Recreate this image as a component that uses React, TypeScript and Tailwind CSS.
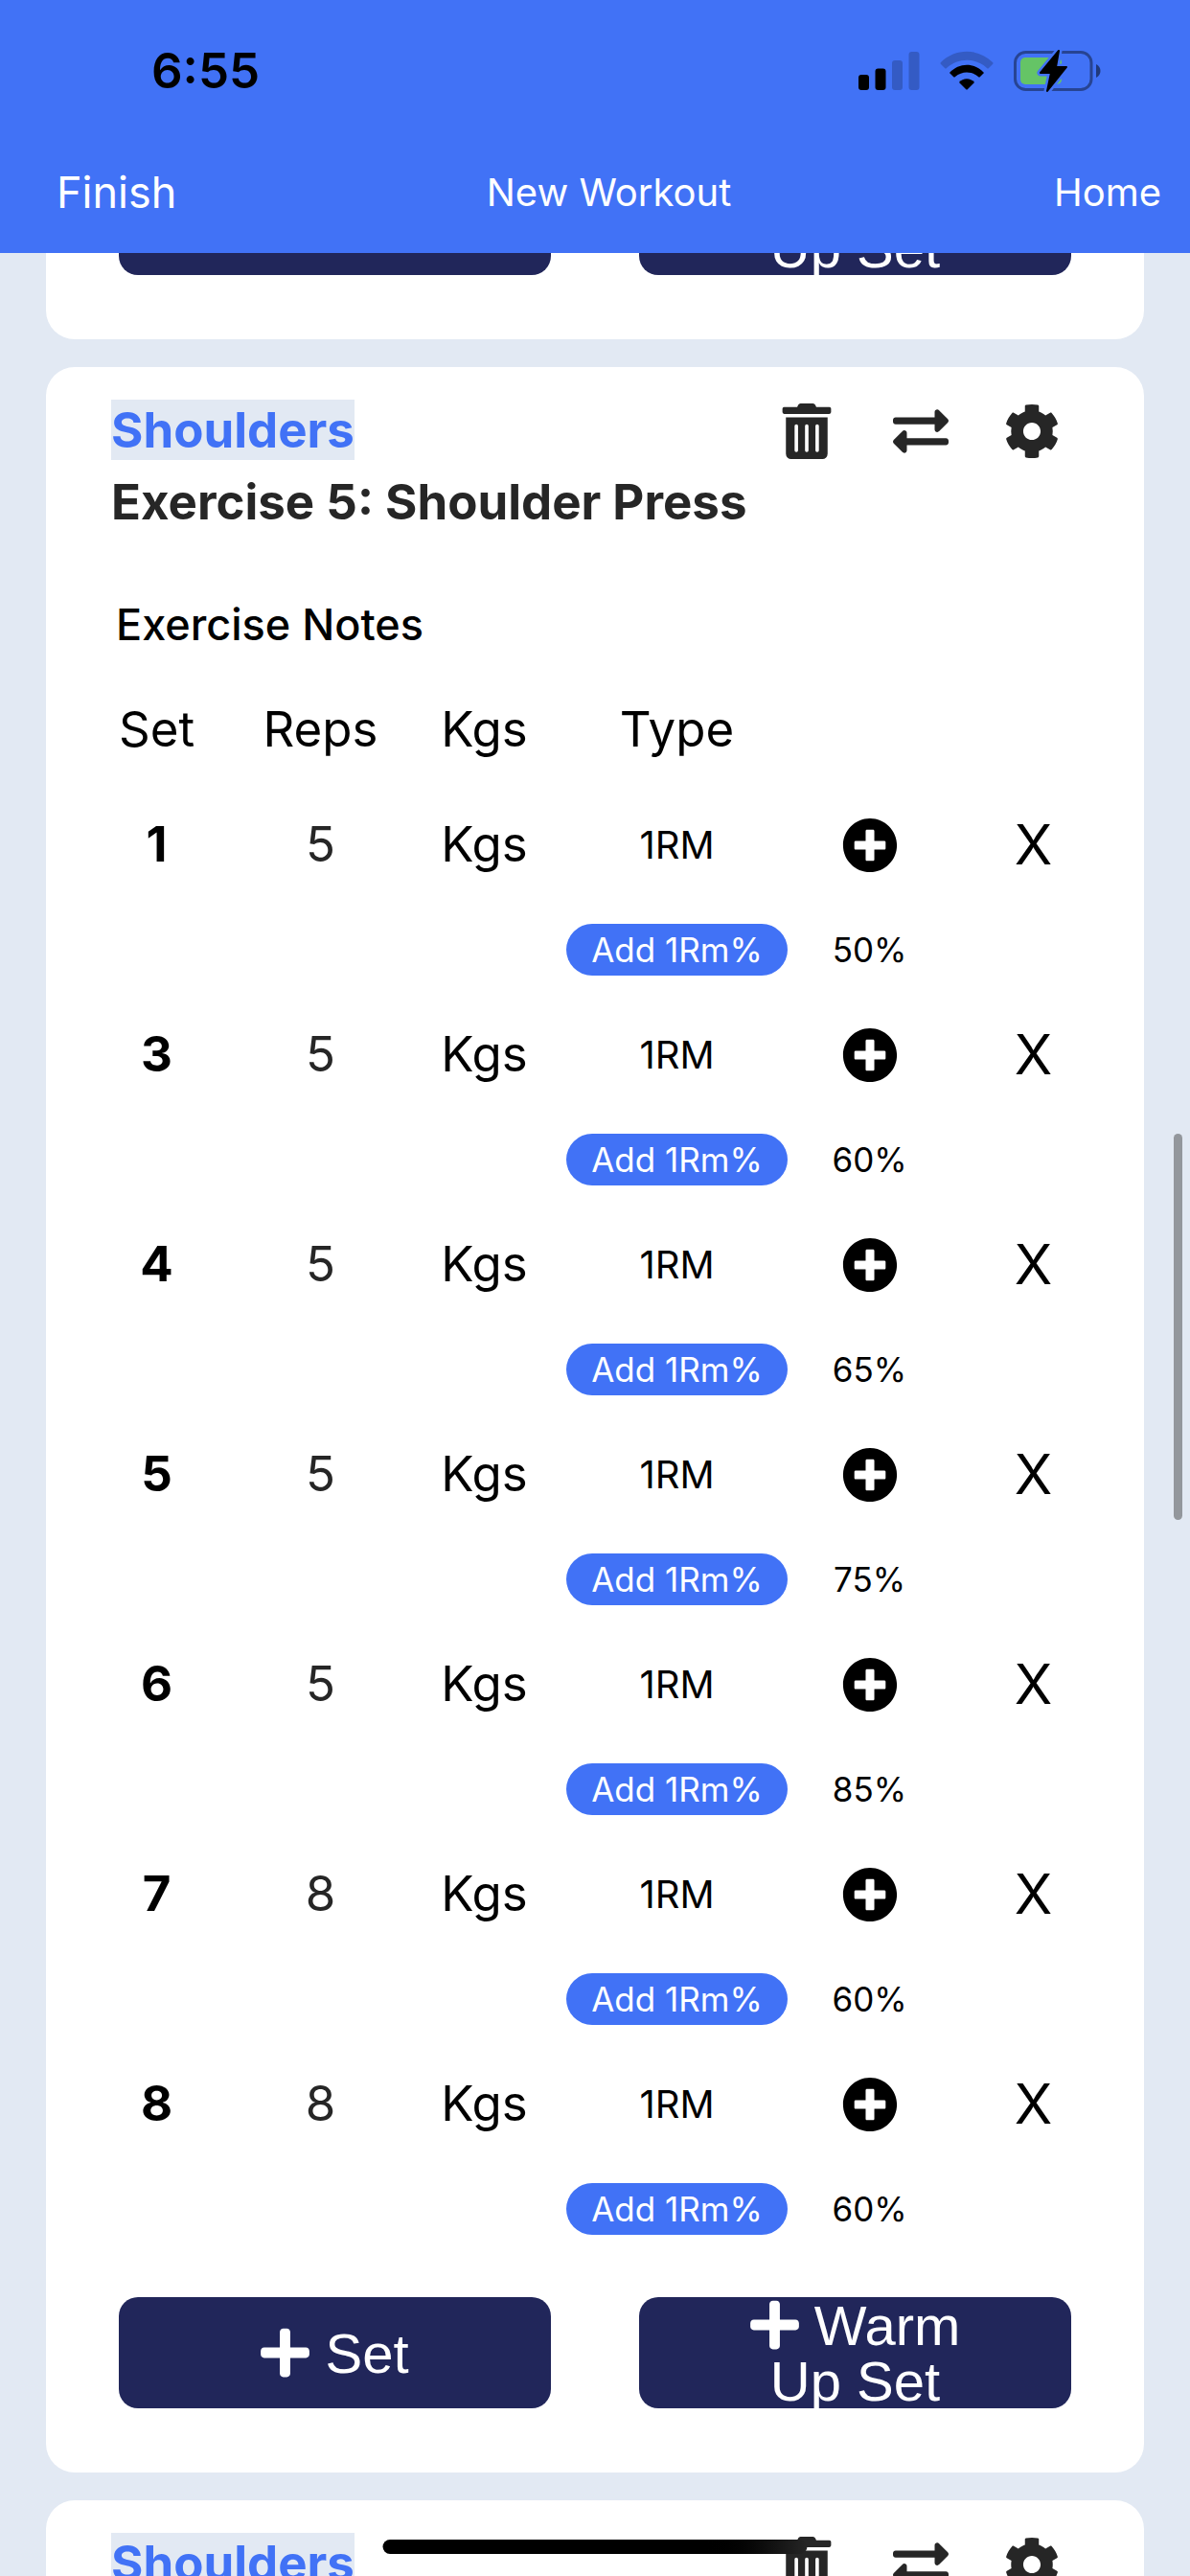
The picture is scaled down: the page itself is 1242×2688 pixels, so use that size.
import { FaCog, FaExchangeAlt, FaPlus, FaPlusCircle, FaTrashAlt } from 'react-icons/fa'

interface WorkoutSet {
    number: number,
    reps: string,
    type: string,
    percent: string,
}

const sets: WorkoutSet[] = [
    { number: 1, reps: "5", type: "1RM", percent: "50%" },
    { number: 3, reps: "5", type: "1RM", percent: "60%" },
    { number: 4, reps: "5", type: "1RM", percent: "65%" },
    { number: 5, reps: "5", type: "1RM", percent: "75%" },
    { number: 6, reps: "5", type: "1RM", percent: "85%" },
    { number: 7, reps: "8", type: "1RM", percent: "60%" },
    { number: 8, reps: "8", type: "1RM", percent: "60%" },
]

const StatusBar = () => {
    return (
        <div className="flex h-[148px] items-center justify-between pl-[158px] pr-[92px]">
            <p className="text-[51px] font-semibold text-black">6:55</p>
            <div className="flex items-center">
                <svg className="h-[42px] w-[64px]" viewBox="0 0 64 42" aria-hidden="true">
                    <rect x="0" y="25" width="11" height="16" rx="3" />
                    <rect x="17.500" y="18.500" width="11" height="22.500" rx="3" />
                    <rect x="35" y="10" width="11" height="31" rx="3" opacity="0.2" />
                    <rect x="52.500" y="1" width="11" height="40" rx="3" opacity="0.2" />
                </svg>
                <svg className="ml-[21px] h-[42px] w-[56px]" viewBox="0 0 56 42" aria-hidden="true">
                    <path d="M1 14 Q0 13 1 12 C16 -3 40 -3 55 12 Q56 13 55 14 L51 18 Q50 19 49 18 C37 7 19 7 7 18 Q6 19 5 18 Z" opacity="0.2" />
                    <path d="M10 23 C20 12 36 12 46 23 L42 27 Q41 28 40 27 C33 21 23 21 16 27 Q15 28 14 27 Z" />
                    <path d="M20 33 C24 28 32 28 36 33 L29 40 Q28 41 27 40 Z" />
                </svg>
                <svg className="ml-[21px] h-[44px] w-[92px]" viewBox="0 0 92 44" aria-hidden="true">
                    <rect x="1.500" y="2.500" width="79.500" height="39" rx="11" fill="none" stroke="#000000" strokeWidth="3" opacity="0.4" />
                    <path d="M86 15 C92 18 92 26 86 29 Z" opacity="0.5" />
                    <rect x="7" y="8" width="43" height="28" rx="5" fill="#65c466" />
                    <path d="M47 1 L28 24 H39 L35 43 L55 18 H44 Z" stroke="#4172f6" strokeWidth="7" strokeLinejoin="round" />
                    <path d="M47 1 L28 24 H39 L35 43 L55 18 H44 Z" stroke="#000000" strokeWidth="2" strokeLinejoin="round" />
                </svg>
            </div>
        </div>
    )
}

const Header = () => {
    return (
        <header className="z-10 h-[264px] shrink-0 bg-[#4172f6] text-white">
            <StatusBar />
            <nav className="grid h-[106px] grid-cols-3 items-center pl-[59px] pr-[30px]">
                <button type="button" className="justify-self-start text-[45px]">Finish</button>
                <h1 className="justify-self-center text-[40px]">New Workout</h1>
                <a href="#home" className="justify-self-end text-[40px]">Home</a>
            </nav>
        </header>
    )
}

const ExerciseHeading = ({ group, title }: { group: string, title: string }) => {
    return (
        <div className="flex items-start justify-between pl-[38px] pr-[58px] pt-[34px] font-bold text-[#262626]">
            <div className="flex flex-col items-start">
                <p className="bg-[#e2e9f3] text-[51px] leading-[63px] text-[#4172f6]">{group}</p>
                <h2 className="mt-3 whitespace-nowrap text-[51px] leading-[63px]">{title}</h2>
            </div>
            <div className="flex items-center gap-[58px] pt-1">
                <button type="button" aria-label="Delete exercise" className="w-[58px]"><FaTrashAlt className="h-[58px] w-[52px]" /></button>
                <button type="button" aria-label="Swap exercise" className="w-[58px]"><FaExchangeAlt className="h-[58px] w-[58px]" /></button>
                <button type="button" aria-label="Exercise settings" className="w-[58px]"><FaCog className="h-[58px] w-[58px]" /></button>
            </div>
        </div>
    )
}

const SetRows = ({ set }: { set: WorkoutSet }) => {
    return (
        <>
            <tr className="h-[109px]">
                <th scope="row" className="text-[51px] font-bold">{set.number}</th>
                <td>
                    <input aria-label={`Reps for set ${set.number}`} defaultValue={set.reps} className="w-full text-center text-[51px] text-[#262626]" />
                </td>
                <td>
                    <input aria-label={`Kgs for set ${set.number}`} placeholder="Kgs" className="w-full text-center text-[51px] placeholder:text-black" />
                </td>
                <td className="text-[40px]">{set.type}</td>
                <td>
                    <button type="button" aria-label="Add note" className="block w-full"><FaPlusCircle className="mx-auto h-[58px] w-[58px]" /></button>
                </td>
                <td>
                    <button type="button" aria-label={`Remove set ${set.number}`} className="text-[58px]">X</button>
                </td>
            </tr>
            <tr className="h-[110px]">
                <td colSpan={3}></td>
                <td>
                    <button type="button" className="block h-[54px] w-full rounded-full bg-[#4172f6] text-[35px] leading-[54px] text-white">Add 1Rm%</button>
                </td>
                <td className="text-[35px]">{set.percent}</td>
                <td></td>
            </tr>
        </>
    )
}

const SetButtons = () => {
    return (
        <div className="grid shrink-0 grid-cols-2 gap-[92px] px-[46px] pb-[67px] font-['Liberation_Sans',Arial,sans-serif] text-[58px] leading-[58px] text-white">
            <button type="button" className="h-[116px] rounded-[20px] bg-[#21265a]">
                <FaPlus className="inline h-[58px] w-[51px] align-[-8px]" /> Set
            </button>
            <button type="button" className="h-[116px] rounded-[20px] bg-[#21265a] px-[100px]">
                <FaPlus className="inline h-[58px] w-[51px] align-[-8px]" /> Warm Up Set
            </button>
        </div>
    )
}

const ExerciseCard = () => {
    return (
        <section className="shrink-0 rounded-[30px] bg-white px-[30px]">
            <ExerciseHeading group="Shoulders" title="Exercise 5: Shoulder Press" />
            <input aria-label="Exercise notes" placeholder="Exercise Notes" className="mt-[60px] block h-[72px] w-full px-[43px] text-[45px] font-medium placeholder:text-black" />
            <table className="mb-[37px] mt-2 w-full table-fixed text-center">
                <thead className="text-[51px]">
                    <tr className="h-[132px]">
                        <th scope="col" className="font-normal">Set</th>
                        <th scope="col" className="font-normal">Reps</th>
                        <th scope="col" className="font-normal">Kgs</th>
                        <th scope="col" className="w-[231px] font-normal">Type</th>
                        <td></td>
                        <td></td>
                    </tr>
                </thead>
                <tbody>
                    {sets.map((set) => <SetRows key={set.number} set={set} />)}
                </tbody>
            </table>
            <SetButtons />
        </section>
    )
}

const App = () => {
    return (
        <div className="relative flex h-screen flex-col overflow-hidden bg-[#e2e9f3] font-['Inter',sans-serif] text-black">
            <Header />
            <main className="flex min-h-0 flex-1 flex-col gap-[29px] overflow-hidden px-12">
                {/* tail of the previous exercise, scrolled under the header */}
                <section className="flex h-[90px] shrink-0 flex-col justify-end overflow-hidden rounded-b-[30px] bg-white px-[30px]">
                    <SetButtons />
                </section>
                <ExerciseCard />
                <section className="shrink-0 rounded-t-[30px] bg-white px-[30px]">
                    <ExerciseHeading group="Shoulders" title="Exercise 6: Lateral Raise" />
                </section>
            </main>
            {/* scroll thumb and home indicator */}
            <div className="absolute right-[8px] top-[44%] h-[15%] w-[9px] rounded-full bg-[#93979c]"></div>
            <div className="absolute bottom-[23px] left-1/2 h-[15px] w-[443px] -translate-x-1/2 rounded-full bg-linear-to-r from-black from-75% to-[#262626]"></div>
        </div>
    )
}

export default App
